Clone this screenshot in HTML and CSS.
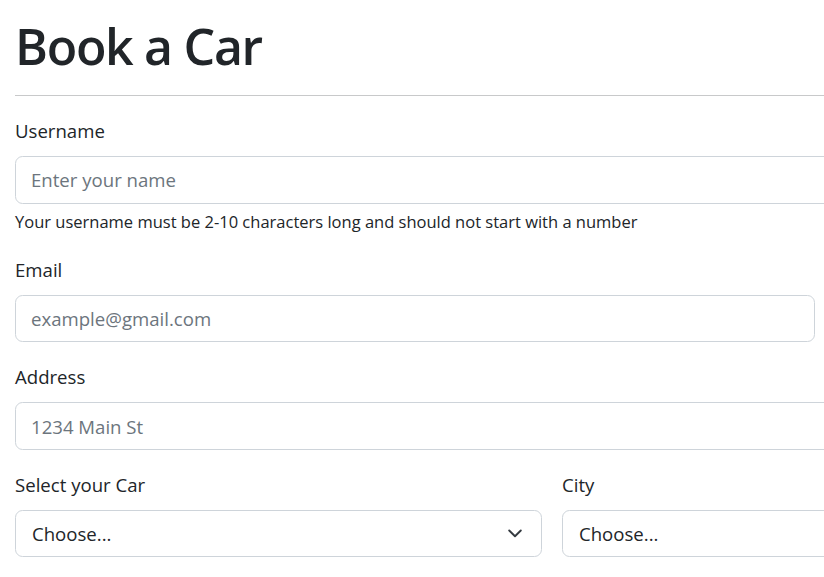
FILE: index.html
```html
<!DOCTYPE html>
<html lang="en">
<head>
<meta charset="utf-8">
<title>Book a Car</title>
<link rel="stylesheet" href="styles.css">
</head>
<body>
<div class="page">
  <h1 class="title">Book a Car</h1>
  <hr class="divider">
  <form class="form">
    <div class="field">
      <label class="label" for="username">Username</label>
      <input class="control" id="username" type="text" placeholder="Enter your name">
      <div class="help">Your username must be 2-10 characters long and should not start with a number</div>
    </div>
    <div class="field field-email">
      <label class="label" for="email">Email</label>
      <input class="control" id="email" type="email" placeholder="example@gmail.com">
    </div>
    <div class="field">
      <label class="label" for="address">Address</label>
      <input class="control" id="address" type="text" placeholder="1234 Main St">
    </div>
    <div class="row">
      <div class="col">
        <div class="label">Select your Car</div>
        <div class="select">
          <span>Choose...</span>
          <svg class="chev" width="14" height="9" viewBox="0 0 14 9"><path d="M1.2 1.5 7 7.2 12.8 1.5" fill="none" stroke="#343a40" stroke-width="1.9" stroke-linecap="round" stroke-linejoin="round"/></svg>
        </div>
      </div>
      <div class="col">
        <div class="label">City</div>
        <div class="select">
          <span>Choose...</span>
          <svg class="chev" width="14" height="9" viewBox="0 0 14 9"><path d="M1.2 1.5 7 7.2 12.8 1.5" fill="none" stroke="#343a40" stroke-width="1.9" stroke-linecap="round" stroke-linejoin="round"/></svg>
        </div>
      </div>
    </div>
  </form>
</div>
</body>
</html>
```
FILE: styles.css
```css
html, body {
  margin: 0;
  padding: 0;
  background: #fff;
  overflow: hidden;
}
body {
  font-family: "Segoe UI", "Open Sans", "Noto Sans", sans-serif;
  color: #212529;
  font-size: 18.6px;
  line-height: 1.5;
}
.page {
  width: 1080px;
  padding: 16px 15px 0 15px;
}
.title {
  margin: 0 0 19px 0;
  font-size: 50px;
  font-weight: 600;
  line-height: 60px;
  letter-spacing: -1.3px;
  color: #212529;
}
.divider {
  margin: 0 0 20px 0;
  border: 0;
  border-top: 1px solid #c8c9ca;
  height: 0;
}
.form {
  display: flex;
  flex-direction: column;
  gap: 20px;
}
.field {
  display: flex;
  flex-direction: column;
}
.field-email {
  width: 800px;
}
.label {
  display: block;
  height: 30px;
  line-height: 30px;
  margin-bottom: 10px;
  font-size: 18.6px;
}
.control {
  box-sizing: border-box;
  height: 47.5px;
  width: 100%;
  padding: 0 15px;
  border: 1px solid #ced4da;
  border-radius: 7.5px;
  font-family: inherit;
  font-size: 18.6px;
  color: #212529;
  background: #fff;
  outline: none;
}
.control::placeholder {
  color: #6c757d;
  opacity: 1;
}
.help {
  margin-top: 5px;
  font-size: 16.5px;
  line-height: 26.25px;
  color: #212529;
}
.row {
  display: flex;
  gap: 20px;
  width: 1074px;
}
.col {
  flex: 1 1 0;
  display: flex;
  flex-direction: column;
}
.select {
  box-sizing: border-box;
  height: 47.5px;
  padding: 0 19px 0 16px;
  border: 1px solid #ced4da;
  border-radius: 7.5px;
  display: flex;
  align-items: center;
  justify-content: space-between;
  font-size: 18.6px;
  color: #212529;
}
.chev {
  display: block;
}
```
